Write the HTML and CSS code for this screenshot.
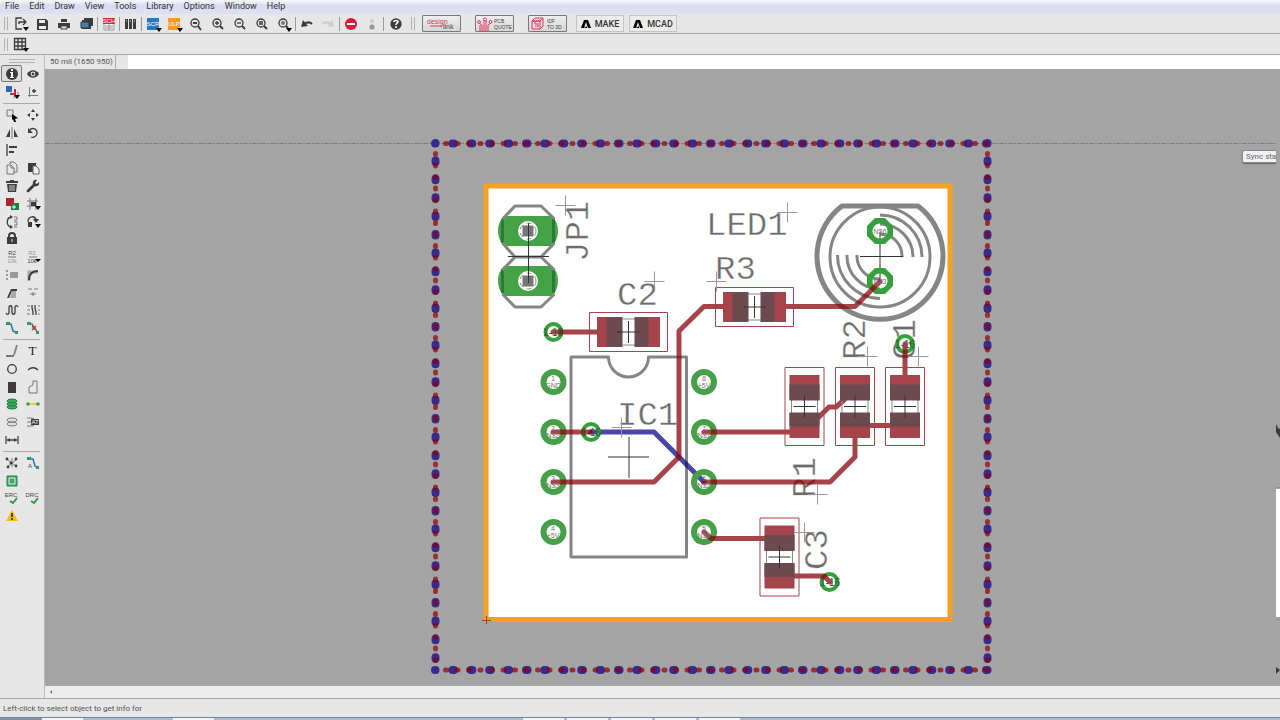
FILE: index.html
```html
<!DOCTYPE html>
<html lang="en">
<head>
<meta charset="utf-8">
<title>Board editor</title>
<link rel="stylesheet" href="styles.css">
</head>
<body>
<nav class="menubar" aria-label="Main menu">
<button>File</button><button>Edit</button><button>Draw</button><button>View</button><button>Tools</button><button>Library</button><button>Options</button><button>Window</button><button>Help</button>
</nav>

<div class="toolbar">
<span class="grip"></span>
<button class="tool" aria-label="Open"><svg viewBox="0 0 18 18"><path class="l" d="M11 3H5v11h6M8 9V7h6M12 4l3 3-3 3"/><path class="k" d="M12 12h6l-3 4z"/></svg></button>
<button class="tool" aria-label="Save"><svg viewBox="0 0 18 18"><path class="d" d="M4 4h9l2 2v9H4z"/><path fill="#eee" d="M6 5h6v3H6zM6 11h7v3H6z"/></svg></button>
<button class="tool" aria-label="Print"><svg viewBox="0 0 18 18"><path class="d" d="M6 4h6v3H6zM3 8h12v5H3z"/><path fill="#ddd" stroke="#444" d="M6 11h6v3H6z"/></svg></button>
<button class="tool" aria-label="CAM processor"><svg viewBox="0 0 18 18"><path class="d" d="M7 3h9v8h-2v3H5V5h2z"/><path fill="#3c83ad" stroke="#333" d="M4 7h8v6H4z"/></svg></button>
<button class="tool divided" aria-label="Schematic"><svg viewBox="0 0 18 18"><path fill="#fafafa" stroke="#999" d="M4 4h10v11H4z"/><path fill="#d9283a" d="M3 3h12v6H3z"/><text class="tiny white" x="9" y="8">SCH</text><path stroke="#999" d="M5 11h8M5 13h8M9 9v6"/></svg></button>
<button class="tool divided" aria-label="Use library"><svg viewBox="0 0 18 18"><path class="d" d="M3 4h3v10H3zM7 4h3v10H7zM11 4h3v10h-3z"/><path stroke="#ddd" d="M4 6h1M8 6h1M12 6h1"/></svg></button>
<button class="tool divided" aria-label="Run script"><svg viewBox="0 0 18 18"><path fill="#2679c2" d="M3 3h12v12H3z"/><text class="tiny white" x="9" y="11">SCR</text><path class="k" d="M12 13h6l-3 4z"/></svg></button>
<button class="tool" aria-label="Run ULP"><svg viewBox="0 0 18 18"><path fill="#f29a23" d="M3 3h12v12H3z"/><text class="tiny white" x="9" y="11">ULP</text><path class="k" d="M12 13h6l-3 4z"/></svg></button>
<button class="tool" aria-label="Zoom to fit"><svg viewBox="0 0 18 18"><circle class="l" cx="8" cy="8" r="4"/><path class="h" d="m11 11 3 4"/><path class="d" d="M6 7h4v2H6z"/></svg></button>
<button class="tool" aria-label="Zoom in"><svg viewBox="0 0 18 18"><circle class="l" cx="8" cy="8" r="4"/><path class="h" d="m11 11 3 3"/><path class="l" d="M6 8h4M8 6v4"/></svg></button>
<button class="tool" aria-label="Zoom out"><svg viewBox="0 0 18 18"><circle class="l" cx="8" cy="8" r="4"/><path class="h" d="m11 11 3 3"/><path class="l" d="M6 8h4"/></svg></button>
<button class="tool" aria-label="Zoom redraw"><svg viewBox="0 0 18 18"><circle class="l" cx="8" cy="8" r="4"/><path class="h" d="m11 11 3 3"/><path class="l" d="M6 7h4M6 9h4"/></svg></button>
<button class="tool" aria-label="Zoom select"><svg viewBox="0 0 18 18"><circle class="l" cx="8" cy="8" r="4"/><path class="h" d="m11 11 2 2"/><circle fill="#777" cx="8" cy="8" r="2"/><path class="k" d="M11 13h6l-3 4z"/></svg></button>
<button class="tool divided" aria-label="Undo"><svg viewBox="0 0 18 18"><path class="h" d="M6 9c3-2 6-2 8 0"/><path class="d" d="m3 12 2-7 5 6z"/></svg></button>
<button class="tool dim" aria-label="Redo"><svg viewBox="0 0 18 18"><path class="h" d="M12 9c-3-2-6-2-8 0"/><path class="d" d="m15 12-2-7-5 6z"/></svg></button>
<button class="tool divided" aria-label="Stop"><svg viewBox="0 0 18 18"><circle cx="9" cy="9" r="6" fill="#d9183a"/><path fill="#fff" d="M5 8h8v2H5z"/></svg></button>
<button class="tool" aria-label="Go"><svg viewBox="0 0 18 18"><circle cx="9" cy="6" r="2" fill="#ccc"/><circle cx="9" cy="12" r="2.6" fill="#999"/></svg></button>
<button class="tool divided" aria-label="Help"><svg viewBox="0 0 18 18"><circle class="d" cx="10" cy="9" r="5.7"/><path fill="none" stroke="#fff" stroke-width="1.6" d="M8 7c0-2 4-2 4 0 0 1-2 1-2 3M10 11v2"/></svg></button>
<span class="grip wide"></span>
<button class="plate" aria-label="Design link"><svg viewBox="0 0 37 16"><text class="script" x="4" y="8">design</text><text class="script dark" x="20" y="13">link</text><path fill="none" stroke="#e0355b" d="M7 10h10l2 1"/></svg></button>
<button class="plate" aria-label="PCB quote"><svg viewBox="0 0 37 16"><path fill="none" stroke="#e0355b" d="M6 15V9L3 7M8 15V4M10 15V4M12 15V9l3-2M4 15V9"/><g fill="#fff" stroke="#e0355b"><circle cx="3" cy="6" r="1.4"/><circle cx="9" cy="3.5" r="1.5"/><circle cx="14.500" cy="6" r="1.4"/></g><text class="micro" x="18" y="7">PCB</text><text class="micro" x="18" y="13">QUOTE</text></svg></button>
<button class="plate" aria-label="IDF to 3D"><svg viewBox="0 0 37 16"><path fill="#f6dce2" stroke="#e0355b" d="M3 5h8v8H3zM3 5l3-3h8l-3 3zM14 2v8l-3 3M5 7h2v4M9 7v4"/><text class="micro" x="18" y="7">IDF</text><text class="micro" x="18" y="13">TO 3D</text></svg></button>
<button class="brand first"><svg viewBox="0 0 10 10"><path d="M0 9 3 1h4l3 8H7L5 3 3 9zM3 9l3-2v2z"/></svg>MAKE</button>
<button class="brand"><svg viewBox="0 0 10 10"><path d="M0 9 3 1h4l3 8H7L5 3 3 9zM3 9l3-2v2z"/></svg>MCAD</button>
</div>

<div class="toolbar options">
<span class="grip"></span>
<button class="tool" aria-label="Grid"><svg viewBox="0 0 18 18"><path class="l" d="M3.500 3.500h11v11h-11zM7 3v12M11 3v12M3 7h12M3 11h12"/><path class="k" d="M12 13h6l-3 4z"/></svg></button>
</div>

<div class="workspace">
<aside class="toolbox" aria-label="Editing tools">
<span class="hgrip"></span>
<div class="tools pair">
<button class="active" aria-label="Info"><svg viewBox="0 0 18 18"><circle class="d" cx="9" cy="9" r="6"/><path fill="#fff" d="M8 4h2v2H8zM7 7h3v5h1v1H7v-1h1V8H7z"/></svg></button>
<button aria-label="Show"><svg viewBox="0 0 18 18"><path class="d" d="M3 9c3-5 9-5 12 0-3 5-9 5-12 0z"/><circle cx="9" cy="9" r="2.4" fill="#ddd"/><circle class="d" cx="9" cy="9" r="1.300"/></svg></button>
<button aria-label="Layers"><svg viewBox="0 0 18 18"><path fill="#2b67b8" d="M3 3h6v6H3z"/><path fill="none" stroke="#c8234b" stroke-width="2" d="M7 11h5V6"/><path fill="none" stroke="#777" d="M10 14h5V9"/><path class="k" d="M11 12h6l-3 4z"/></svg></button>
<button aria-label="Mark"><svg viewBox="0 0 18 18"><path class="t" d="M5.500 4v10M4 12.500h10"/><path class="l" d="M10 6v4M8 8h4"/></svg></button>
</div>
<hr>
<div class="tools edit">
<button aria-label="Group"><svg viewBox="0 0 18 18"><path class="t" d="M4 4h6v6H4z"/><path class="k" d="m9 8 6 4-3 1 1 3-2 0-1-3-1 1z"/></svg></button>
<button aria-label="Move"><svg viewBox="0 0 18 18"><path class="d" d="m9 3 2 3H7zM9 15l2-3H7zM3 9l3-2v4zM15 9l-3-2v4z"/></svg></button>
<button aria-label="Mirror"><svg viewBox="0 0 18 18"><path class="d" d="M7 5v8H3zM11 5v8h4z"/><path class="t" d="M9 3v12"/></svg></button>
<button aria-label="Rotate"><svg viewBox="0 0 18 18"><path class="l" d="M5 7c2-4 8-3 8 2 0 3-3 5-6 4"/><path class="d" d="M4 4v5h5z"/></svg></button>
<button aria-label="Align"><svg viewBox="0 0 18 18"><path class="l" d="M4 3v12"/><path class="d" d="M6 5h8v2H6zM6 10h5v2H6z"/></svg></button><span></span>
<button aria-label="Copy"><svg viewBox="0 0 18 18"><path class="t" d="M7 5V3h4l3 3v7h-3M4 6h4l3 3v6H4zM8 6v3h3"/></svg></button>
<button aria-label="Paste"><svg viewBox="0 0 18 18"><path class="d" d="M4 4h8v9H4z"/><path fill="#eee" stroke="#666" d="M9 7h3l3 3v5H9z"/></svg></button>
<button aria-label="Delete"><svg viewBox="0 0 18 18"><path class="d" d="M7 3h4v1h4v2H3V4h4zM4 7h10l-1 8H5z"/><path stroke="#ccc" d="M7 8v6M9 8v6M11 8v6"/></svg></button>
<button aria-label="Change"><svg viewBox="0 0 18 18"><path class="d" d="m3 13 6-6c-1-3 2-5 4-4l-2 3 2 1 2-2c1 3-2 5-4 4l-6 6c-2 1-3-1-2-2z"/></svg></button>
<button aria-label="Add part"><svg viewBox="0 0 18 18"><path fill="#b41f36" d="M3 3h8v8H3z"/><path fill="#247c3b" d="M8 8h8v7H8z"/><path stroke="#fff" d="M11 10v4M9 12h4"/></svg></button>
<button aria-label="Replace"><svg viewBox="0 0 18 18"><path class="t" d="M3 6h11M3 11h9M6 3v12M12 3v12"/><path class="d" d="M7 7h5v4H7z"/><path class="k" d="M11 11h6l-3 4z"/></svg></button>
<button aria-label="Pin swap"><svg viewBox="0 0 18 18"><path class="l" d="M8 4c-5 1-5 9 0 10"/><path class="d" d="m7 2 3 2-3 2zM7 12l3 2-3 2z"/><path class="t" d="M11 4h3v3h-3M11 9h3v3h-3M14 14h-3"/></svg></button>
<button aria-label="Gate swap"><svg viewBox="0 0 18 18"><path class="l" d="M4 9c0-6 7-7 8-2"/><path class="d" d="M4 9h4v5H4zM9 6h6l-3 4z"/><path class="k" d="M11 11h6l-3 4z"/></svg></button>
<button aria-label="Lock"><svg viewBox="0 0 18 18"><path class="h" d="M6 8V6c0-4 6-4 6 0v2"/><path class="d" d="M4 7h10v7H4z"/><path stroke="#eee" d="M9 9v3"/></svg></button><span></span>
<button aria-label="Name"><svg viewBox="0 0 18 18"><text class="tiny" x="9" y="7">R2</text><path class="t" d="M5 9h8"/><text class="tiny faint" x="9" y="15">10k</text></svg></button>
<button aria-label="Value"><svg viewBox="0 0 18 18"><text class="tiny faint" x="8" y="7">R2</text><path class="t" d="M5 9h8"/><text class="tiny" x="8" y="15">10k</text><path class="k" d="M11 11h6l-3 3z"/></svg></button>
<button aria-label="Smash"><svg viewBox="0 0 18 18"><path fill="#999" d="M7 6h8v6H7zM3 4h2v2H3zM3 8h2v2H3zM3 12h2v2H3z"/></svg></button>
<button aria-label="Miter"><svg viewBox="0 0 18 18"><path fill="none" stroke="#aaa" stroke-width="3" d="M5 15V6h9"/><path class="h" d="M5 14c0-6 3-9 9-9"/></svg></button>
<button aria-label="Split"><svg viewBox="0 0 18 18"><path class="d" d="M4 14 8 5h6v2H9l-3 7z"/><path fill="#aaa" d="m9 7-2 7h6V7z"/></svg></button>
<button aria-label="Optimize"><svg viewBox="0 0 18 18"><path class="t" d="M4 5h4M10 5h4M6 10h6M9 8v4"/></svg></button>
<button aria-label="Meander"><svg viewBox="0 0 18 18"><path class="l" d="M3 12c1 2 3 2 3-1V7c0-3 3-3 3 0v4c0 3 3 3 3 0V7c0-3 2-3 3-1"/></svg></button>
<button aria-label="Differential pair"><svg viewBox="0 0 18 18"><path class="l" d="M8 4v3l1 4v3M11 4v3l1 4v3"/><path class="t" d="M3 5h3M3 9h3M3 13h3M14 5h2M14 9h2M14 13h2"/></svg></button>
<button aria-label="Route"><svg viewBox="0 0 18 18"><path fill="none" stroke="#2878b5" stroke-width="1.500" d="M4 5h4l2 7 4 2"/><path fill="#2f9b61" d="M3 3h4v3H3zM12 12h3v3h-3z"/></svg></button>
<button aria-label="Rip up"><svg viewBox="0 0 18 18"><path fill="none" stroke="#2f9b61" stroke-width="1.500" d="M4 5h4l6 9"/><path fill="#2f9b61" d="M3 3h4v3H3zM12 12h3v3h-3z"/><path stroke="#d02542" stroke-width="1.500" d="m8 7 4 4M12 7l-4 4"/></svg></button>
</div>
<hr>
<div class="tools draw">
<button aria-label="Wire"><svg viewBox="0 0 18 18"><path class="l" d="M3 14h8"/><path stroke="#888" stroke-width="2" d="m11 13 3-10"/></svg></button>
<button aria-label="Text" class="letter">T</button>
<button aria-label="Circle"><svg viewBox="0 0 18 18"><circle class="l" cx="9" cy="9" r="4.300"/></svg></button>
<button aria-label="Arc"><svg viewBox="0 0 18 18"><path class="l" d="M4 10c3-3 7-3 10 0"/></svg></button>
<button aria-label="Rectangle"><svg viewBox="0 0 18 18"><path class="d" d="M5 4h8v11H5z"/></svg></button>
<button aria-label="Polygon"><svg viewBox="0 0 18 18"><path class="t" d="M9 3h4v12H5V9l4-2z"/></svg></button>
<button aria-label="Via"><svg viewBox="0 0 18 18"><g fill="#36ad5c" stroke="#247c3b"><ellipse cx="9" cy="12" rx="5" ry="2"/><ellipse cx="9" cy="9" rx="5" ry="2"/><ellipse cx="9" cy="6" rx="5" ry="2"/></g></svg></button>
<button aria-label="Signal"><svg viewBox="0 0 18 18"><path stroke="#d8d444" stroke-width="2" d="M5 9h8"/><circle cx="4" cy="9" r="1.700" fill="#329a48"/><circle cx="14" cy="9" r="1.700" fill="#329a48"/></svg></button>
<button aria-label="Hole"><svg viewBox="0 0 18 18"><g fill="#ddd" stroke="#777"><ellipse cx="9" cy="11" rx="5" ry="2"/><ellipse cx="9" cy="7" rx="5" ry="2"/></g></svg></button>
<button aria-label="Attribute"><svg viewBox="0 0 18 18"><path class="t" d="M3 5h6l3 4-3 4H3M3 9h9"/><path class="d" d="M7 6h8v6H7z"/><text class="tiny white" x="11" y="11">AT</text></svg></button>
<button aria-label="Dimension"><svg viewBox="0 0 18 18"><path class="l" d="M3 5v8M15 5v8M4 9h10"/><path class="d" d="m4 9 3-2v4zM14 9l-3-2v4z"/></svg></button><span></span>
</div>
<hr>
<div class="tools check">
<button aria-label="Ratsnest"><svg viewBox="0 0 18 18"><path class="t" d="m4 5 10 8M4 13l10-8M9 4v9"/><g class="d"><circle cx="4" cy="5" r="1.400"/><circle cx="13" cy="5" r="1.400"/><circle cx="8" cy="9" r="1.400"/><circle cx="5" cy="13" r="1.400"/><circle cx="13" cy="12" r="1.400"/></g></svg></button>
<button aria-label="Autorouter"><svg viewBox="0 0 18 18"><path fill="none" stroke="#2878b5" stroke-width="1.500" d="M4 5h5l2 7 3 2"/><path fill="#2f9b61" d="M3 3h4v3H3zM12 12h3v3h-3z"/><text class="tiny" x="6" y="14">A</text></svg></button>
<button aria-label="Fusion"><svg viewBox="0 0 18 18"><path fill="#41aa69" stroke="#24844a" d="M4 4h10v10H4z"/><path fill="none" stroke="#d8f0df" d="M6 6h6v6H6z"/></svg></button><span></span>
<button aria-label="ERC"><svg viewBox="0 0 18 18"><text class="tiny" x="8" y="8">ERC</text><path class="g" d="m7 12 3 2 4-5"/></svg></button>
<button aria-label="DRC"><svg viewBox="0 0 18 18"><text class="tiny" x="8" y="8">DRC</text><path class="g" d="m7 12 3 2 4-5"/></svg></button>
<button aria-label="Errors"><svg viewBox="0 0 18 18"><path fill="#f7bd17" d="m9 3 6 11H3z"/><path stroke="#222" stroke-width="1.500" d="M9 6v4M9 11v2"/></svg></button><span></span>
</div>
</aside>

<main class="editor">
<div class="command"><span class="coords">50 mil (1650 950)</span><input type="text" aria-label="Command line"></div>
<div class="stage">
<svg class="board" viewBox="45 69 1235 617" preserveAspectRatio="xMinYMin slice" role="img" aria-label="Circuit board layout">
<defs>
<g id="chip">
<path class="thin" d="M-13-13h26M-13 13h26" stroke-width="2"/>
<path class="outline" d="M-39-19.500h78v39h-78z"/>
<path fill="#a5444a" d="M-31.500-15h25v30h-25zM6.500-15h25v30h-25z"/>
<path fill="#6c4b50" d="M-22-15h16v30h-16zM6-15h14v30H6z"/>
<path class="cross" d="M-11 0h22M0-11v22"/>
</g>
<g id="ring"><circle r="10" fill="none" stroke="#45a047" stroke-width="6"/></g>
<g id="via"><circle r="8" fill="none" stroke="#35a03c" stroke-width="4"/></g>
<path id="mark" class="origin" d="M-10 0h20M0-10v20"/>
<path id="octpad" fill="#35a03c" fill-rule="evenodd" d="M-5-13H5l8 8V5l-8 8H-5l-8-8V-5zM0-7.500a7.500 7.500 0 1 0 .01 0z"/>
<g id="header">
<path fill="#45a347" d="M-24-15h48q6 6 6 15t-6 15h-48q-6-6-6-15t6-15z"/>
<path fill="#2d7935" d="M-27-12h3v24h-3zM24-12h3v24h-3z"/>
<circle r="10" fill="#fff"/><path fill="#777" d="M-5.500-5.500h11v11h-11z"/><circle class="thin" r="8" stroke-dasharray="5 4"/>
</g>
</defs>
<path class="guide" d="M45 143.500h1231"/>
<path fill="#fff" stroke="#f7a021" stroke-width="5" d="M486 186h464v433.500H486z"/>
<g class="route-blue"><path d="M435 143.500H988M435 670H988M435.500 143V670M987.500 143V670"/></g>
<g class="route-red"><path d="M435 143.500H988M435 670H988M435.500 143V670M987.500 143V670"/></g>

<g class="name">
<text transform="translate(588 262) rotate(-90)">JP1</text>
<text x="706" y="235">LED1</text><text x="715" y="279">R3</text><text x="617" y="305">C2</text><text x="617" y="425">IC1</text>
<text transform="translate(865 360) rotate(-90)">R2</text><text transform="translate(915 360) rotate(-90)">C1</text><text transform="translate(815 498) rotate(-90)">R1</text><text transform="translate(827 570) rotate(-90)">C3</text>
</g>

<use href="#header" x="528" y="231"/><use href="#header" x="528" y="281"/>
<path class="silk" d="M502.500 219l12.500-13h26l13.500 13M502.500 243l12.500 14h26l13.500-14M502.500 270l12.500-13M541 257l13.500 13M502.500 294l12.500 13h26l13.500-13"/>
<path class="cross" d="M508 256.500h41M528.500 223v60"/>

<path class="silk" d="M571 357h37.500a20 20 0 0 0 40 0h38v200H571z"/>
<path class="cross" d="M608 457h41M629 437v41"/>

<path class="silk heavy" d="M842 206h76a63 63 0 1 1-76 0z"/>
<circle class="silk" cx="880" cy="257" r="50"/>
<path class="silk" d="M880 215a42 42 0 0 1 42 42M880 224a33 33 0 0 1 33 33M880 234a22 22 0 0 1 22 23M837.500 255a43 43 0 0 0 42.500 43.500M847 255a33 33 0 0 0 33 34M857 255a23 23 0 0 0 23 24"/>
<path class="cross" d="M860 256.500h43M880 232v50"/>

<g class="copper blue"><path d="M591 432h63l50 50"/></g>
<use href="#ring" x="553.500" y="382"/><use href="#ring" x="553.500" y="432"/><use href="#ring" x="553.500" y="482"/><use href="#ring" x="553.500" y="532"/>
<use href="#ring" x="704" y="382"/><use href="#ring" x="704" y="432"/><use href="#ring" x="704" y="482"/><use href="#ring" x="704" y="532"/>
<use href="#via" x="553.500" y="332"/><use href="#via" x="591" y="432"/><use href="#via" x="905" y="344"/><use href="#via" x="829.500" y="582"/>
<use href="#octpad" x="880" y="231"/><use href="#octpad" x="880" y="281"/>
<g class="copper red"><path d="M553 332h45M553 432h38M553 482h101l25-25V331l25-24.500h20M786 306.500h69l25-25M704 432h87M818 418l11-11h7l8-7M870 425.500h21M905 344v33M855 437v20l-25 25H704M704 532l7 6.500h54M794 576h30l6 6"/></g>
<use href="#chip" transform="translate(628.500 332)"/><use href="#chip" transform="translate(754.500 307)"/>
<use href="#chip" transform="translate(804.500 406.500) rotate(90)"/><use href="#chip" transform="translate(855 406.500) rotate(90)"/><use href="#chip" transform="translate(905 406.500) rotate(90)"/><use href="#chip" transform="translate(779.500 557) rotate(90)"/>

<g class="pin">
<text x="553" y="381">1</text><text x="553" y="388">GND</text><text x="553" y="431">2</text><text x="553" y="438">N$2</text><text x="553" y="481">3</text><text x="553" y="488">N$3</text><text x="553" y="531">4</text><text x="553" y="538">+5V</text>
<text x="704" y="381">8</text><text x="704" y="388">+5V</text><text x="704" y="431">7</text><text x="704" y="438">N$1</text><text x="704" y="481">6</text><text x="704" y="488">N$2</text><text x="704" y="531">5</text><text x="704" y="538">N$5</text>
<text x="880" y="234">N$6</text><text x="880" y="284">N$3</text>
</g>
<g class="via-name"><text x="553" y="336">1-16</text><text x="591" y="436">1-16</text><text x="905" y="348">1-16</text><text x="830" y="586">1-16</text></g>

<use href="#mark" x="565.500" y="205.500"/><use href="#mark" x="654.500" y="281.500"/><use href="#mark" x="787.500" y="212.500"/><use href="#mark" x="716.500" y="281.500"/><use href="#mark" x="621.500" y="427.500"/><use href="#mark" x="867.500" y="356.500"/><use href="#mark" x="918.500" y="356.500"/><use href="#mark" x="817.500" y="494.500"/><use href="#mark" x="804.500" y="532.500"/>
<path stroke="#8d4b2c" d="M482 620.500h9M486.500 616v8"/>

<path fill="#fff" d="M1276 489h4v128h-4z"/>
<path stroke="#c9689a" d="M1276 487.500h4M1276 619.500h4"/>
<path fill="#343a40" d="M1276 424l2 4 2 1v9l-4-6zM1276 667l4 3-4 4z"/>
</svg>
<span class="tip">Sync sta</span>
</div>
<div class="scroll"><button aria-label="Scroll left"><svg viewBox="0 0 6 6"><path d="M4 1 2 3l2 2z"/></svg></button></div>
</main>
</div>

<footer class="status">Left-click to select object to get info for</footer>
<div class="taskbar"><i class="start"></i><i class="win"></i><i class="space"></i><i class="win"></i><i class="space long"></i><i class="win"></i><i class="win"></i><i class="win"></i><i class="win"></i><i class="win"></i><i class="rest"></i></div>
</body>
</html>
```
FILE: styles.css
```css
* { box-sizing: border-box; }
html, body { height: 100%; }
body {
  margin: 0;
  display: flex;
  flex-direction: column;
  overflow: hidden;
  background: #e7e7e7;
  color: #333;
  font-family: Roboto, "Noto Sans", sans-serif;
  font-size: 8px;
}
button { margin: 0; padding: 0; border: 0; background: none; color: inherit; font: inherit; }
svg { display: block; }

.menubar {
  display: flex;
  flex: none;
  gap: 10px;
  height: 14px;
  padding: 0 5px;
  background: linear-gradient(#f8faff, #dadcf2 40%, #dfe0f0);
}
.menubar button { height: 13px; line-height: 13px; font-size: 9px; color: #333; }

.toolbar {
  display: flex;
  flex: none;
  align-items: center;
  height: 20px;
  border-bottom: 1px solid #a8a8a8;
}
.toolbar.options { height: 21px; }
.grip {
  flex: none;
  width: 4px;
  height: 13px;
  margin: 0 1px 0 4px;
  border: solid #b2b2b2;
  border-width: 0 1px;
}
.grip.wide { margin: 0 7px 0 6px; }
.tool {
  display: flex;
  flex: none;
  align-items: center;
  justify-content: center;
  width: 22px;
  height: 14px;
}
.tool svg { width: 18px; height: 18px; flex: none; }
.divided { border-left: 1px solid #999; }
.dim { opacity: 0.15; }

.l { fill: none; stroke: #3c3c3c; stroke-width: 1.3; }
.t { fill: none; stroke: #777; stroke-width: 1; }
.h { fill: none; stroke: #3c3c3c; stroke-width: 2; }
.d { fill: #3c3c3c; }
.k { fill: #000; }
.g { fill: none; stroke: #2f9740; stroke-width: 2; }
.tiny { font: 6px "Liberation Sans", sans-serif; text-anchor: middle; fill: #444; }
.tiny.white { fill: #fff; }
.tiny.faint { fill: #999; }
.micro { font: 5px "Liberation Sans", sans-serif; fill: #444; }
.script { font: 7px "Liberation Sans", sans-serif; fill: #e0355b; }
.script.dark { fill: #444; }

.plate {
  flex: none;
  width: 39px;
  height: 17px;
  margin-right: 14px;
  border: 1px solid #777;
  border-radius: 1px;
  background: linear-gradient(#eee, #d7d7d7);
}
.brand {
  display: flex;
  flex: none;
  align-items: center;
  justify-content: center;
  gap: 4px;
  width: 48px;
  height: 17px;
  margin-right: 5px;
  border: 1px solid #c4c4c4;
  background: #ebebeb;
  font: 500 9px Roboto, sans-serif;
}
.brand.first { margin-left: -5px; }
.brand svg { width: 10px; height: 10px; }

.workspace { display: flex; flex: 1; min-height: 0; }
.toolbox {
  display: flex;
  flex: none;
  flex-direction: column;
  width: 45px;
  padding: 4px 2px 0 1px;
  border-right: 1px solid #bbb;
  border-bottom: 1px solid #a8a8a8;
}
.hgrip {
  height: 4px;
  margin: 0 7px 2px 8px;
  border: solid #b2b2b2;
  border-width: 1px 0;
}
.tools { display: grid; grid-template-columns: 21px 21px; grid-auto-rows: 1fr; }
.tools.pair { height: 36px; }
.tools.edit { height: 231px; }
.tools.draw { height: 107px; }
.tools.check { height: 71px; }
.tools button { display: flex; align-items: center; justify-content: center; min-height: 0; }
.tools svg { flex: none; width: 18px; height: 18px; }
.tools .active { height: 17px; border: 1px solid #777; border-radius: 2px; background: #ddd; }
.tools .letter { font: 13px "Liberation Serif", serif; color: #222; }
.toolbox hr { align-self: stretch; height: 1px; margin: 2px; border: 0; background: #aaa; }

.editor { display: flex; flex: 1; flex-direction: column; min-width: 0; }
.command { display: flex; flex: none; height: 14px; }
.coords {
  width: 71px;
  margin-right: 12px;
  padding-left: 5px;
  border-right: 1px solid #aaa;
  color: #555;
  font-size: 8px;
  line-height: 14px;
  white-space: nowrap;
}
.command input {
  flex: 1;
  min-width: 0;
  padding: 0 4px;
  border: 0;
  outline: 0;
  background: #fff;
  font: 8px Roboto, sans-serif;
}
.stage { position: relative; flex: 1; min-height: 0; overflow: hidden; background: #a4a4a4; }
.board { width: 100%; height: 100%; }
.tip {
  position: absolute;
  top: 81px;
  right: 4px;
  width: 34px;
  height: 13px;
  padding-left: 3px;
  overflow: hidden;
  border: solid #888;
  border-width: 1px 0 1px 1px;
  border-radius: 2px 0 0 2px;
  background: #f1f1f6;
  box-shadow: 0 1px 1px #666;
  color: #666;
  font-size: 8px;
  line-height: 11px;
  white-space: nowrap;
}
.scroll { flex: none; height: 13px; border-bottom: 1px solid #aaa; background: #ededed; }
.scroll button { display: block; padding: 3px; }
.scroll svg { width: 6px; height: 6px; fill: #777; }

.guide { stroke: #7e7e7e; stroke-dasharray: 5 1 2 1; }
.route-blue path { fill: none; stroke: #382b90; stroke-width: 8; stroke-linecap: round; stroke-dasharray: 1.500 16.900; stroke-dashoffset: 1; }
.route-red { opacity: 0.7; }
.route-red path { fill: none; stroke: #900008; stroke-width: 5; stroke-linecap: round; stroke-dasharray: 1 10.500; stroke-dashoffset: 1; }
.silk { fill: none; stroke: #858585; stroke-width: 3; stroke-linejoin: round; }
.silk.heavy { stroke-width: 5; }
.thin { fill: none; stroke: #888; stroke-width: 1; }
.cross { fill: none; stroke: #333; stroke-width: 1; }
.origin { fill: none; stroke: #999; stroke-width: 1; }
.outline { fill: none; stroke: #a5444a; stroke-width: 1; }
.copper { opacity: 0.75; }
.copper path { fill: none; stroke-width: 5; stroke-linecap: round; stroke-linejoin: round; }
.copper.red path { stroke: #8a060c; }
.copper.blue path { stroke: #0c0888; }
.name { font: 34px "Liberation Mono", monospace; fill: #6c6c6c; stroke: #fff; stroke-width: 0.4; }
.pin { font: 7px "Liberation Sans", sans-serif; text-anchor: middle; fill: #777; }
.via-name { font: 10px "Liberation Sans", sans-serif; text-anchor: middle; fill: #2c5c33; }

.status { flex: none; height: 18px; padding-left: 3px; color: #555; font-size: 8px; line-height: 19px; }
.taskbar { display: flex; flex: none; height: 3px; border-top: 1px solid #75809b; background: #a9bad6; }
.taskbar i { flex: none; }
.start { width: 42px; background: #8593a8; }
.win { width: 41px; margin-right: 3px; background: #f2f5fa; }
.space { width: 87px; }
.space.long { width: 306px; }
.rest { flex: 1; }
```
